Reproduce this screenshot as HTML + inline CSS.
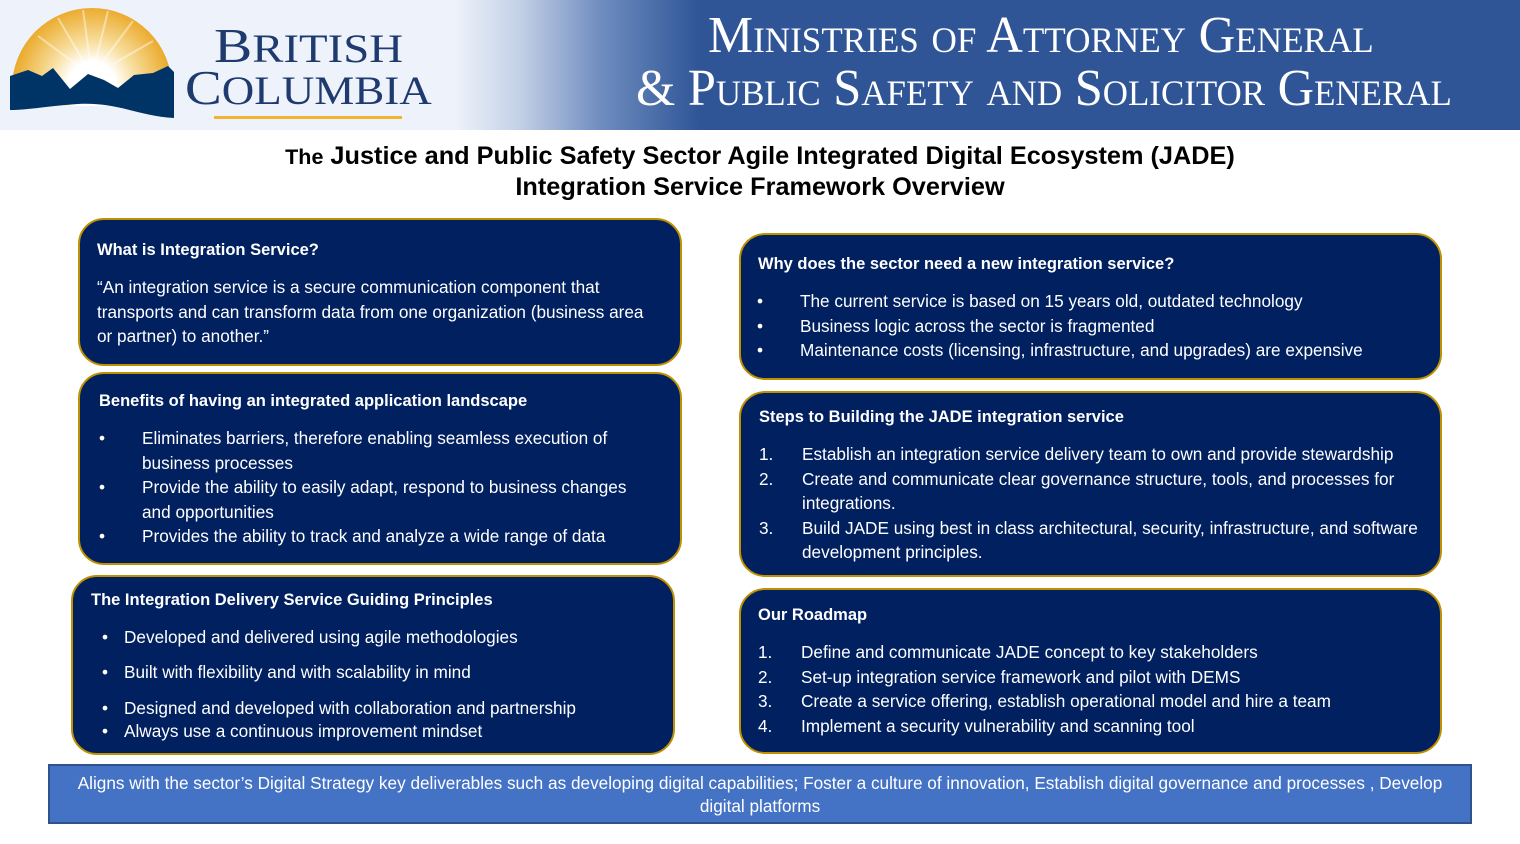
<!DOCTYPE html>
<html><head><meta charset="utf-8"><style>
*{margin:0;padding:0;box-sizing:border-box}
body{width:1520px;height:844px;background:#fff;position:relative;overflow:hidden;font-family:"Liberation Sans",sans-serif}
.hdr{position:absolute;left:0;top:0;width:1520px;height:130px;background:linear-gradient(90deg,#eef3fb 0,#eef3fb 455px,#c3d0e6 520px,#6f8dbf 600px,#2f5597 700px,#2f5597 100%)}
.t{position:absolute;white-space:nowrap;color:#fff;font-size:17.2px;line-height:20px}
.box{position:absolute;background:#002060;border:2px solid #bf9000;border-radius:26px}
.b{font-weight:bold;font-size:16.5px}
.ser{position:absolute;font-family:"Liberation Serif",serif;font-variant:small-caps;color:#fff;white-space:nowrap;transform-origin:left top}
.bc{position:absolute;font-family:"Liberation Serif",serif;color:#1e3a6e;white-space:nowrap;transform-origin:left top;font-size:40px;line-height:48px}
.bc b{font-weight:normal;font-size:49px}
</style></head><body>
<div class="hdr"></div>
<svg style="position:absolute;left:8px;top:6px" width="168" height="114" viewBox="0 0 168 114">
<defs><radialGradient id="g" cx="84" cy="80" r="80" gradientUnits="userSpaceOnUse"><stop offset="0.3" stop-color="#fff"/><stop offset="0.55" stop-color="#f8dfa0"/><stop offset="1" stop-color="#eaa928"/></radialGradient></defs>
<path d="M4 82 A80 80 0 0 1 164 82 L164 100 L4 100Z" fill="url(#g)"/>
<g stroke="#fff" stroke-opacity="0.45" stroke-width="2">
<line x1="84" y1="70" x2="30" y2="30"/><line x1="84" y1="70" x2="50" y2="12"/><line x1="84" y1="70" x2="75" y2="4"/><line x1="84" y1="70" x2="100" y2="5"/><line x1="84" y1="70" x2="125" y2="15"/><line x1="84" y1="70" x2="145" y2="35"/></g>
<path d="M2 70 L20 64 L34 70 L45 62 L62 83 L80 68 L96 74 L110 82 L126 69 L145 67 L160 60 L166 66 L166 112 C130 110 110 96 70 98 C40 100 20 104 2 104Z" fill="#003366"/>
</svg>
<div class="bc" style="left:214px;top:22px;transform:scaleX(1.17)"><b>B</b>RITISH</div>
<div class="bc" style="left:185px;top:64px;transform:scaleX(1.125)"><b>C</b>OLUMBIA</div>
<div style="position:absolute;left:214px;top:116px;width:188px;height:3px;background:#f2b431"></div>
<div class="ser" style="left:708px;top:6px;font-size:52px;transform:scaleX(0.975)">Ministries of Attorney General</div>
<div class="ser" style="left:636px;top:59px;font-size:52px;transform:scaleX(0.97)">&amp; Public Safety and Solicitor General</div>

<div style="position:absolute;left:0;top:141px;width:1520px;text-align:center;font-weight:bold;font-size:25.3px;line-height:30px;color:#000"><span style="font-size:21.5px">The</span> Justice and Public Safety Sector Agile Integrated Digital Ecosystem (JADE)<br>Integration Service Framework Overview</div>

<div class="box" style="left:78px;top:218px;width:604px;height:148px"></div>
<div class="t b" style="left:97px;top:240px">What is Integration Service?</div>
<div class="t" style="left:97px;top:277px">“An integration service is a secure communication component that</div>
<div class="t" style="left:97px;top:302px">transports and can transform data from one organization (business area</div>
<div class="t" style="left:97px;top:326px">or partner) to another.”</div>

<div class="box" style="left:78px;top:372px;width:604px;height:193px"></div>
<div class="t b" style="left:99px;top:391px">Benefits of having an integrated application landscape</div>
<div class="t" style="left:99px;top:428px">•</div><div class="t" style="left:142px;top:428px">Eliminates barriers, therefore enabling seamless execution of</div>
<div class="t" style="left:142px;top:453px">business processes</div>
<div class="t" style="left:99px;top:477px">•</div><div class="t" style="left:142px;top:477px">Provide the ability to easily adapt, respond to business changes</div>
<div class="t" style="left:142px;top:502px">and opportunities</div>
<div class="t" style="left:99px;top:526px">•</div><div class="t" style="left:142px;top:526px">Provides the ability to track and analyze a wide range of data</div>

<div class="box" style="left:71px;top:575px;width:604px;height:180px"></div>
<div class="t b" style="left:91px;top:590px">The Integration Delivery Service Guiding Principles</div>
<div class="t" style="left:102px;top:627px">•</div><div class="t" style="left:124px;top:627px">Developed and delivered using agile methodologies</div>
<div class="t" style="left:102px;top:662px">•</div><div class="t" style="left:124px;top:662px">Built with flexibility and with scalability in mind</div>
<div class="t" style="left:102px;top:698px">•</div><div class="t" style="left:124px;top:698px">Designed and developed with collaboration and partnership</div>
<div class="t" style="left:102px;top:721px">•</div><div class="t" style="left:124px;top:721px">Always use a continuous improvement mindset</div>

<div class="box" style="left:739px;top:233px;width:703px;height:147px"></div>
<div class="t b" style="left:758px;top:254px">Why does the sector need a new integration service?</div>
<div class="t" style="left:757px;top:291px">•</div><div class="t" style="left:800px;top:291px">The current service is based on 15 years old, outdated technology</div>
<div class="t" style="left:757px;top:316px">•</div><div class="t" style="left:800px;top:316px">Business logic across the sector is fragmented</div>
<div class="t" style="left:757px;top:340px">•</div><div class="t" style="left:800px;top:340px">Maintenance costs (licensing, infrastructure, and upgrades) are expensive</div>

<div class="box" style="left:739px;top:391px;width:703px;height:186px"></div>
<div class="t b" style="left:759px;top:407px">Steps to Building the JADE integration service</div>
<div class="t" style="left:759px;top:444px">1.</div><div class="t" style="left:802px;top:444px">Establish an integration service delivery team to own and provide stewardship</div>
<div class="t" style="left:759px;top:469px">2.</div><div class="t" style="left:802px;top:469px">Create and communicate clear governance structure, tools, and processes for</div>
<div class="t" style="left:802px;top:493px">integrations.</div>
<div class="t" style="left:759px;top:518px">3.</div><div class="t" style="left:802px;top:518px">Build JADE using best in class architectural, security, infrastructure, and software</div>
<div class="t" style="left:802px;top:542px">development principles.</div>

<div class="box" style="left:739px;top:588px;width:703px;height:166px"></div>
<div class="t b" style="left:758px;top:605px">Our Roadmap</div>
<div class="t" style="left:758px;top:642px">1.</div><div class="t" style="left:801px;top:642px">Define and communicate JADE concept to key stakeholders</div>
<div class="t" style="left:758px;top:667px">2.</div><div class="t" style="left:801px;top:667px">Set-up integration service framework and pilot with DEMS</div>
<div class="t" style="left:758px;top:691px">3.</div><div class="t" style="left:801px;top:691px">Create a service offering, establish operational model and hire a team</div>
<div class="t" style="left:758px;top:716px">4.</div><div class="t" style="left:801px;top:716px">Implement a security vulnerability and scanning tool</div>

<div style="position:absolute;left:48px;top:764px;width:1424px;height:60px;background:#4472c4;border:2px solid #2f528f"></div>
<div style="position:absolute;left:48px;top:772px;width:1424px;text-align:center;color:#fff;font-size:17.2px;line-height:23px">Aligns with the sector’s Digital Strategy key deliverables such as developing digital capabilities; Foster a culture of innovation, Establish digital governance and processes , Develop<br>digital platforms</div>
</body></html>
